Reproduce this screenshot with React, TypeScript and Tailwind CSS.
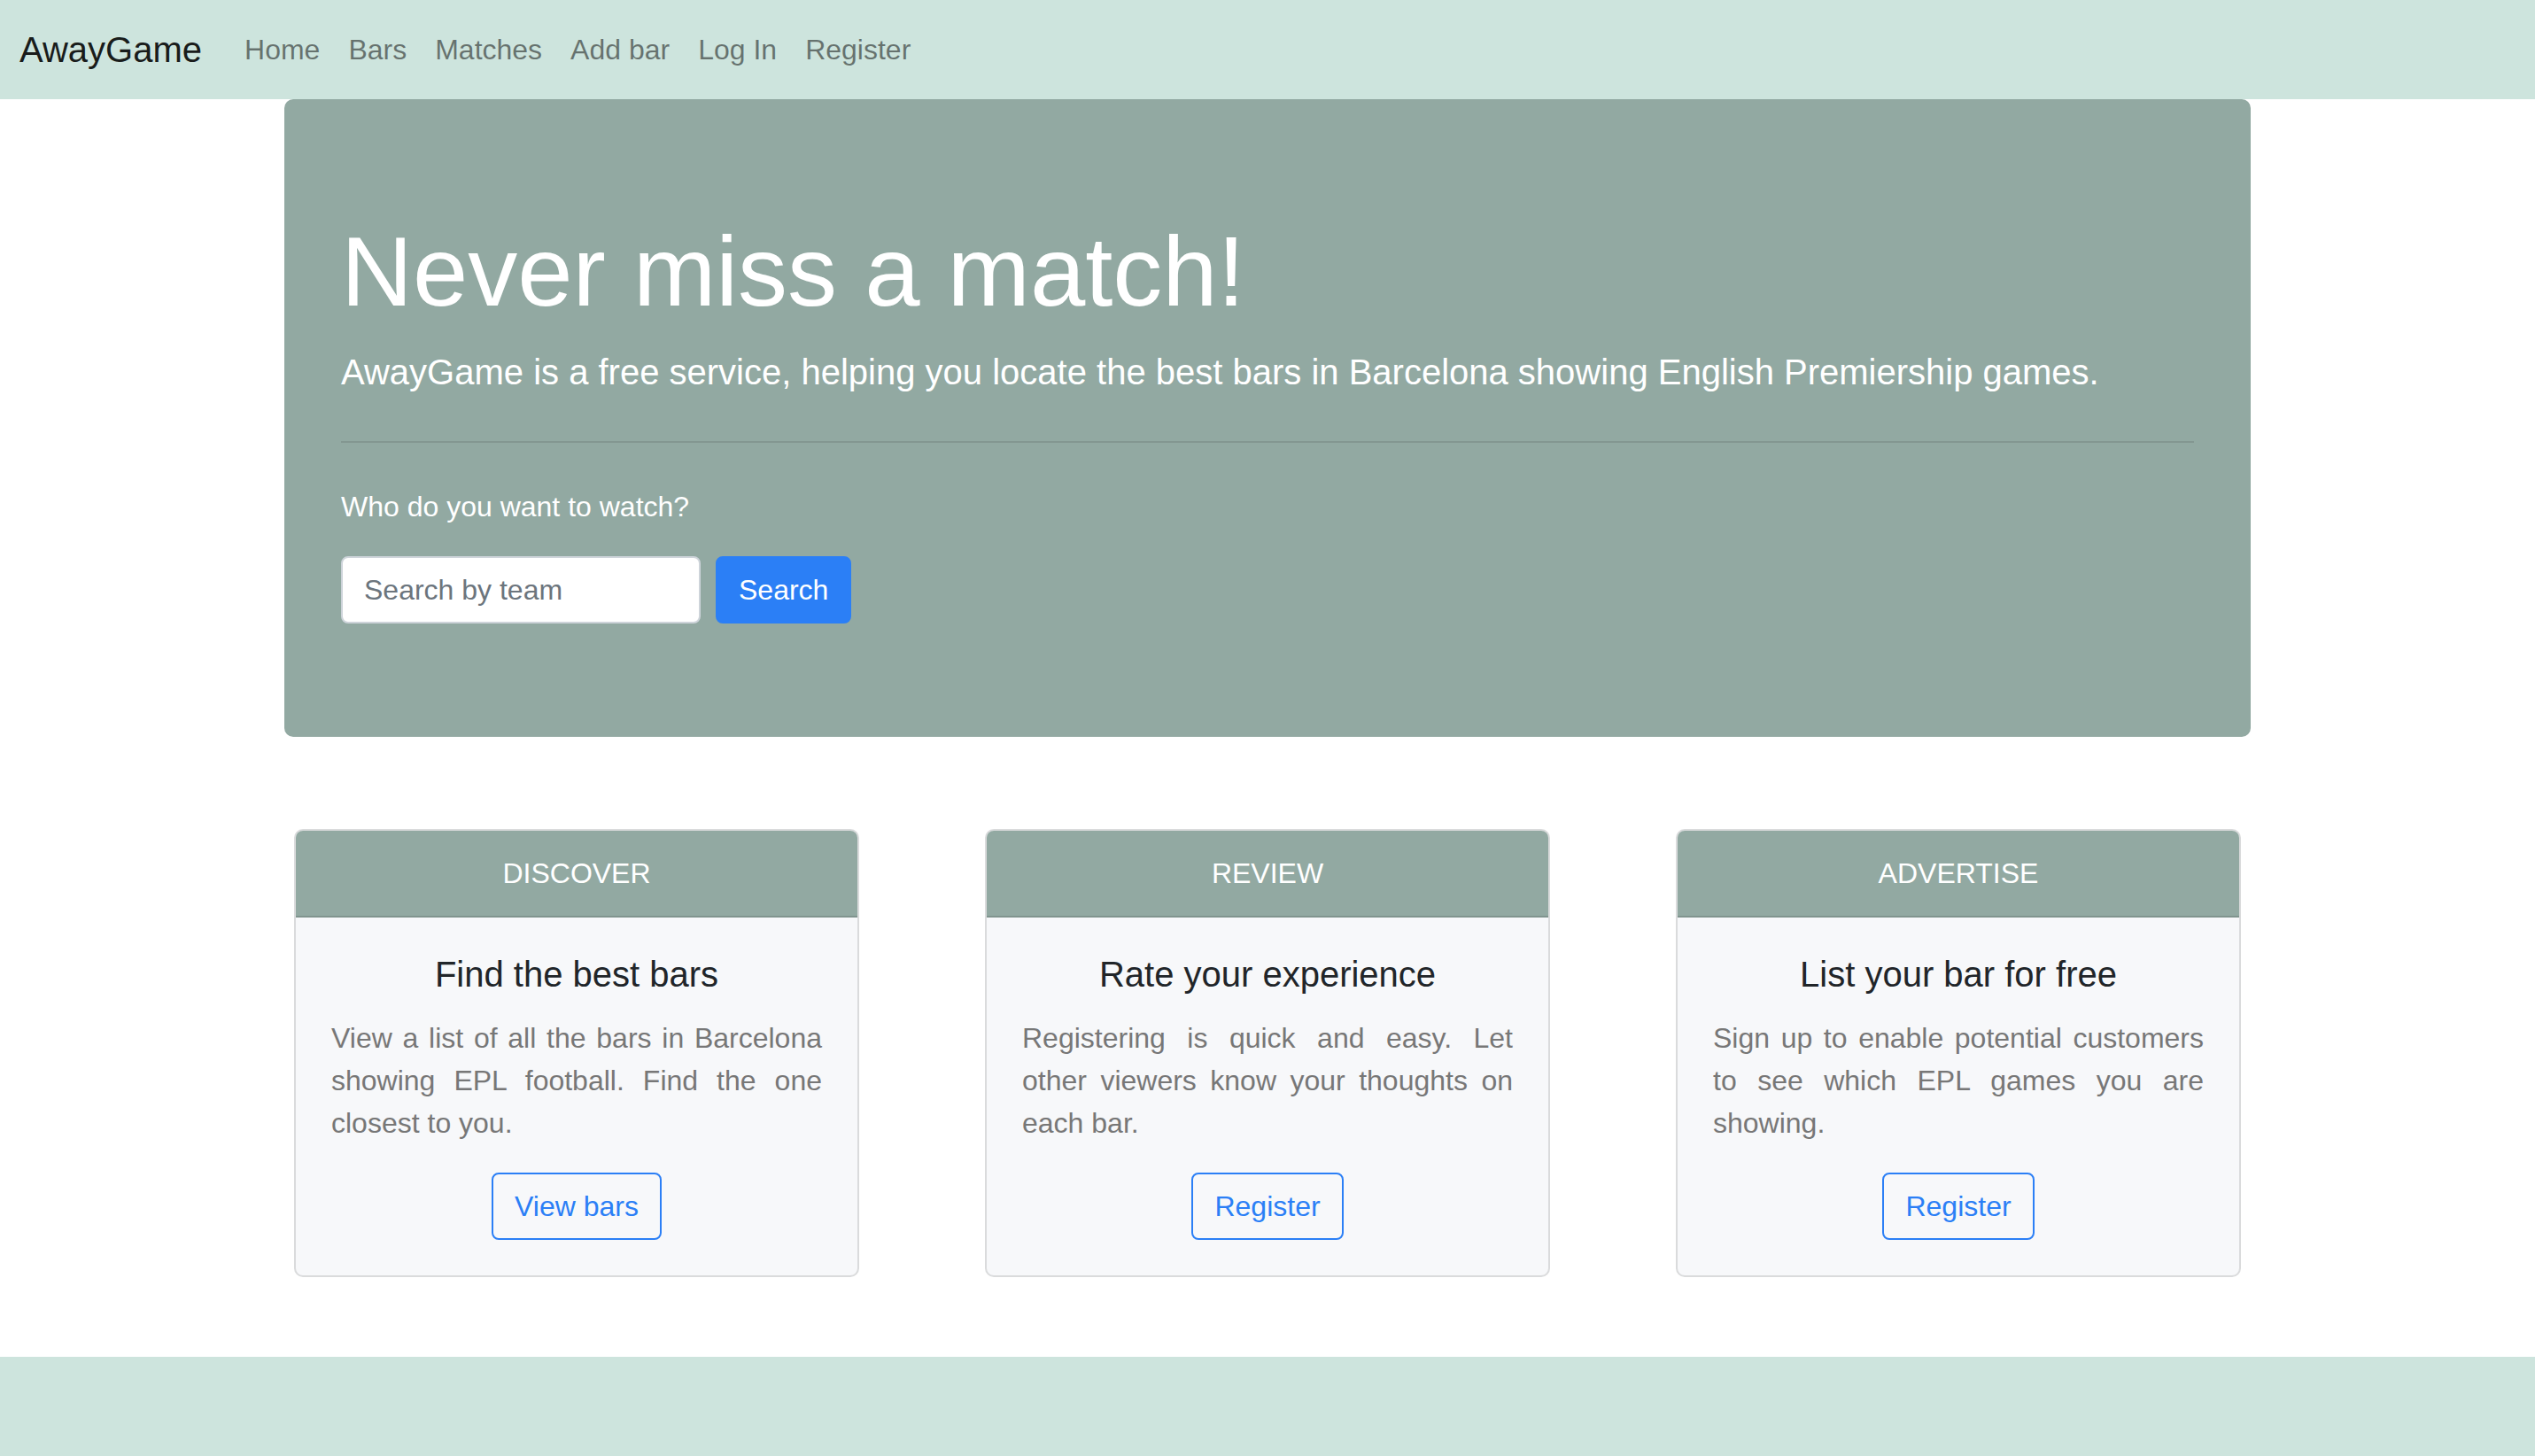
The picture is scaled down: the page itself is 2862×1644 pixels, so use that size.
const navLinks = ["Home", "Bars", "Matches", "Add bar", "Log In", "Register"];

const features = [
  {
    header: "DISCOVER",
    title: "Find the best bars",
    text: "View a list of all the bars in Barcelona showing EPL football. Find the one closest to you.",
    action: "View bars",
  },
  {
    header: "REVIEW",
    title: "Rate your experience",
    text: "Registering is quick and easy. Let other viewers know your thoughts on each bar.",
    action: "Register",
  },
  {
    header: "ADVERTISE",
    title: "List your bar for free",
    text: "Sign up to enable potential customers to see which EPL games you are showing.",
    action: "Register",
  },
];

const App = () => {
  return (
    <div className="min-h-screen flex flex-col bg-white font-['Liberation_Sans',Arial,sans-serif]">
      {/* Navbar */}
      <nav className="h-[112px] shrink-0 bg-[#cde4dd] flex items-center pl-[22px]">
        <a href="#" className="text-[40px] leading-[60px] text-black/90 mr-[32px]">
          AwayGame
        </a>
        <ul className="flex">
          {navLinks.map((link) => (
            <li key={link}>
              <a href="#" className="block px-[16px] text-[32px] leading-[48px] text-black/50">
                {link}
              </a>
            </li>
          ))}
        </ul>
      </nav>

      <main className="w-[2220px] mx-auto">
        {/* Jumbotron */}
        <section className="bg-[#92a9a2] rounded-[10px] px-[64px] py-[128px]">
          <h1 className="text-[112px] leading-[1.2] font-light text-white mb-[16px]">
            Never miss a match!
          </h1>
          <p className="text-[40px] leading-[1.5] font-light text-white">
            AwayGame is a free service, helping you locate the best bars in Barcelona showing
            English Premiership games.
          </p>
          <div className="h-[2px] bg-black/10 my-[48px]" />
          <label className="block text-[32px] leading-[48px] text-white mb-[32px]">
            Who do you want to watch?
          </label>
          <form className="flex gap-[17px]" onSubmit={(e) => e.preventDefault()}>
            <input
              type="text"
              placeholder="Search by team"
              className="w-[406px] h-[76px] bg-white border-2 border-[#ced4da] rounded-[8px] px-[24px] text-[32px] text-[#495057] placeholder:text-[#6c757d] outline-none"
            />
            <button
              type="submit"
              className="h-[76px] px-[24px] bg-[#2b7ff6] border-2 border-[#2b7ff6] text-white text-[32px] rounded-[8px]"
            >
              Search
            </button>
          </form>
        </section>
      </main>

      {/* Feature cards */}
      <div className="w-[2198px] mx-auto mt-[104px] grid grid-cols-3 gap-[142px]">
        {features.map((f) => (
          <div
            key={f.header}
            className="border-2 border-[#dadbdc] rounded-[10px] bg-[#f7f8fa] overflow-hidden"
          >
            <div className="bg-[#92a9a2] border-b-2 border-[#80948e] py-[24px] text-center text-white text-[32px] leading-[48px]">
              {f.header}
            </div>
            <div className="p-[40px] text-center">
              <h5 className="text-[40px] leading-[48px] text-[#212529] mb-[24px]">{f.title}</h5>
              <p className="text-[32px] leading-[48px] text-[#777777] text-justify mb-[32px]">
                {f.text}
              </p>
              <a
                href="#"
                className="inline-flex items-center h-[76px] px-[24px] border-2 border-[#2b7ff6] rounded-[8px] text-[#2b7ff6] text-[32px]"
              >
                {f.action}
              </a>
            </div>
          </div>
        ))}
      </div>

      {/* Footer */}
      <footer className="mt-auto h-[112px] shrink-0 bg-[#cde4dd]" />
    </div>
  );
};

export default App;
